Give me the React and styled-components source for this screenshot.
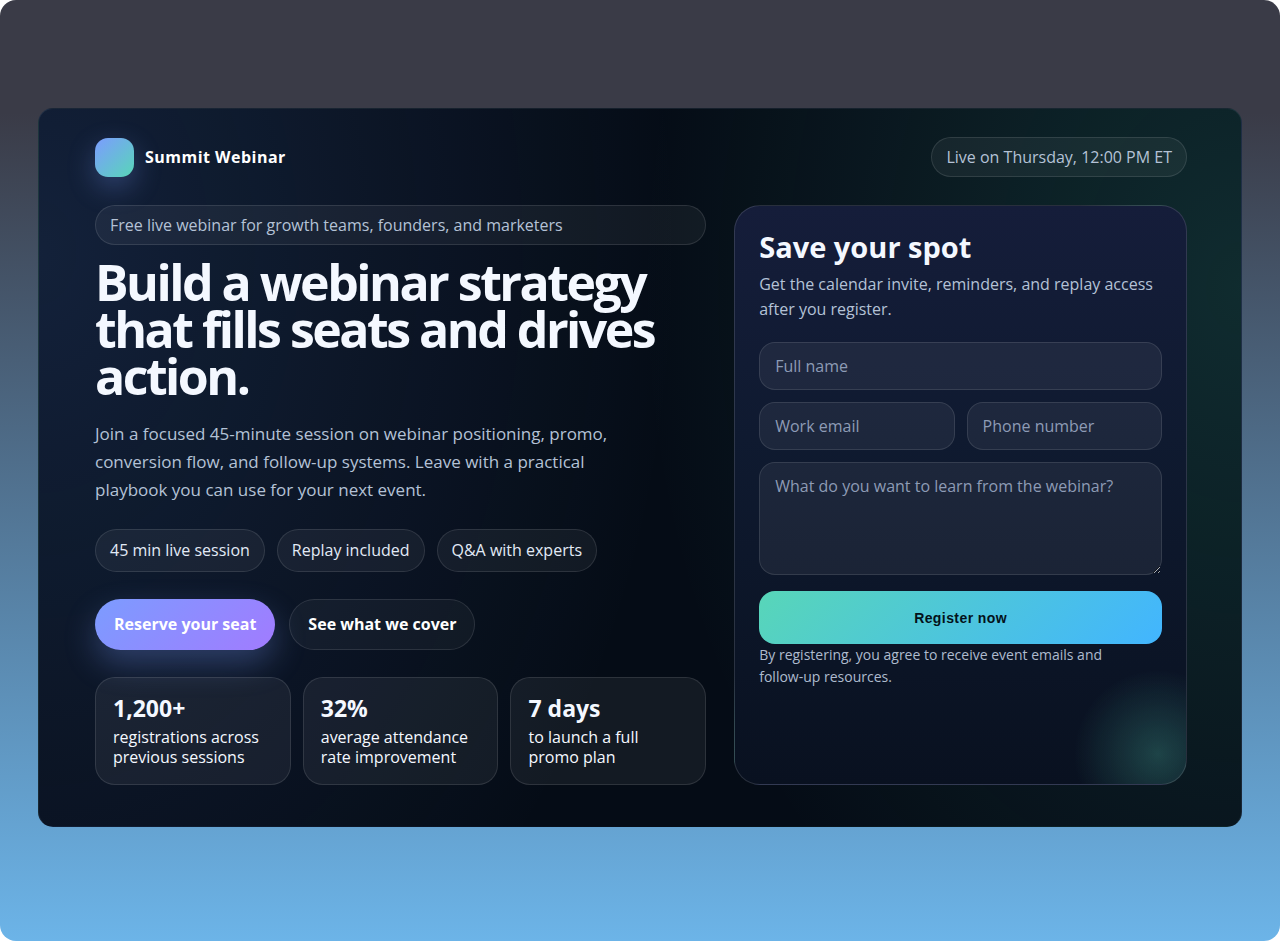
import React from 'react'
import styled, { createGlobalStyle } from 'styled-components'

const stats = [
    { value: '1,200+', label: 'registrations across previous sessions' },
    { value: '32%', label: 'average attendance rate improvement' },
    { value: '7 days', label: 'to launch a full promo plan' },
]

const chips = ['45 min live session', 'Replay included', 'Q&A with experts']

function RegisterForm() {
    return (
        <Card id="register">
            <CardTitle>Save your spot</CardTitle>
            <CardText>Get the calendar invite, reminders, and replay access after you register.</CardText>
            <Form onSubmit={(e) => e.preventDefault()}>
                <Input type="text" aria-label="Full name" placeholder="Full name" />
                <FieldRow>
                    <Input type="email" aria-label="Work email" placeholder="Work email" />
                    <Input type="tel" aria-label="Phone number" placeholder="Phone number" />
                </FieldRow>
                <TextArea
                    aria-label="What do you want to learn from the webinar?"
                    placeholder="What do you want to learn from the webinar?"
                />
                <Submit type="submit">Register now</Submit>
            </Form>
            <Note>By registering, you agree to receive event emails and follow-up resources.</Note>
        </Card>
    )
}

export default function App() {
    return (
        <Page>
            <GlobalStyle />
            <Panel>
                <TopBar>
                    <Brand>
                        <BrandMark />
                        Summit Webinar
                    </Brand>
                    <Pill>Live on Thursday, 12:00 PM ET</Pill>
                </TopBar>
                <Hero>
                    <Intro>
                        <Pill>Free live webinar for growth teams, founders, and marketers</Pill>
                        <Title>Build a webinar strategy that fills seats and drives action.</Title>
                        <Lead>
                            Join a focused 45-minute session on webinar positioning, promo, conversion
                            flow, and follow-up systems. Leave with a practical playbook you can use for
                            your next event.
                        </Lead>
                        <Chips>
                            {chips.map((chip) => (
                                <Chip key={chip}>{chip}</Chip>
                            ))}
                        </Chips>
                        <Actions>
                            <ActionLink href="#register" $primary>Reserve your seat</ActionLink>
                            <ActionLink href="#agenda">See what we cover</ActionLink>
                        </Actions>
                        <Stats>
                            {stats.map((stat) => (
                                <Stat key={stat.value}>
                                    <StatValue>{stat.value}</StatValue>
                                    <StatLabel>{stat.label}</StatLabel>
                                </Stat>
                            ))}
                        </Stats>
                    </Intro>
                    <RegisterForm />
                </Hero>
            </Panel>
        </Page>
    )
}

const GlobalStyle = createGlobalStyle`
    *, *::before, *::after {
        box-sizing: border-box;
    }
    body {
        margin: 0;
        background: #fff;
        color: #f4f8ff;
        font-family: 'Open Sans', 'Noto Sans', sans-serif;
        font-size: 16px;
    }
    h1, h2, p, ul {
        margin: 0;
        padding: 0;
    }
`
const Page = styled.div`
    min-height: 100vh;
    padding: 108px 38px 114px;
    border-radius: 16px;
    background: linear-gradient(180deg, #3a3b47 0%, #3a3b47 12%, #6cb4e8 100%);
`
const Panel = styled.main`
    padding: 28px 54px 41px 56px;
    border: 1px solid rgba(120, 150, 170, 0.14);
    border-bottom-color: transparent;
    border-radius: 15px;
    background:
        radial-gradient(640px 900px at 0% 20%, rgba(90, 138, 235, 0.17), transparent),
        radial-gradient(600px 800px at 100% 25%, rgba(70, 200, 170, 0.17), transparent),
        #050c16;
`
const TopBar = styled.header`
    display: flex;
    align-items: center;
    justify-content: space-between;
    margin-bottom: 28px;
`
const Brand = styled.div`
    display: flex;
    align-items: center;
    gap: 11px;
    color: #fff;
    font-weight: 700;
    letter-spacing: 0.03em;
`
const BrandMark = styled.span`
    width: 39px;
    height: 39px;
    border-radius: 13px;
    background: linear-gradient(135deg, #7c9cff, #58d6b8);
    box-shadow: 0 10px 28px rgba(124, 156, 255, 0.3);
`
const Pill = styled.div`
    padding: 8px 14px;
    border: 1px solid rgba(255, 255, 255, 0.11);
    border-radius: 24px;
    background: rgba(255, 255, 255, 0.05);
    color: #b4c2d6;
    line-height: 22px;
`
const Hero = styled.div`
    display: grid;
    grid-template-columns: 1.35fr 1fr;
    gap: 28px;
`
const Intro = styled.section`
    min-width: 0;
`
const Title = styled.h1`
    margin-top: 14px;
    font-size: 50px;
    line-height: 47px;
    letter-spacing: -0.05em;
`
const Lead = styled.p`
    max-width: 560px;
    margin-top: 20px;
    color: #b4c2d6;
    font-size: 17px;
    line-height: 28px;
`
const Chips = styled.ul`
    display: flex;
    flex-wrap: wrap;
    gap: 12px;
    margin-top: 25px;
    list-style: none;
`
const Chip = styled.li`
    padding: 9px 14px;
    border: 1px solid rgba(255, 255, 255, 0.11);
    border-radius: 22px;
    background: rgba(255, 255, 255, 0.05);
    color: #e2eaf6;
    line-height: 23px;
`
const Actions = styled.div`
    display: flex;
    gap: 14px;
    margin-top: 27px;
`
const ActionLink = styled.a`
    padding: 13px 18px;
    border: 1px solid ${(props) => (props.$primary ? 'transparent' : 'rgba(255, 255, 255, 0.11)')};
    border-radius: 26px;
    background: ${(props) =>
        props.$primary
            ? 'linear-gradient(135deg, #7c9cff, #a17bff) border-box'
            : 'rgba(255, 255, 255, 0.04)'};
    box-shadow: ${(props) => (props.$primary ? '0 14px 32px rgba(124, 156, 255, 0.3)' : 'none')};
    color: #fff;
    font-weight: 700;
    line-height: 23px;
    text-decoration: none;
`
const Stats = styled.div`
    display: grid;
    grid-template-columns: repeat(3, 1fr);
    gap: 12px;
    margin-top: 27px;
`
const Stat = styled.div`
    padding: 15px 17px 17px;
    border: 1px solid rgba(255, 255, 255, 0.11);
    border-radius: 20px;
    background: rgba(255, 255, 255, 0.06);
`
const StatValue = styled.div`
    margin-bottom: 4px;
    font-size: 23px;
    font-weight: 700;
    line-height: 30px;
`
const StatLabel = styled.div`
    line-height: 20px;
`
const Card = styled.section`
    padding: 23px 24px;
    border: 1px solid rgba(255, 255, 255, 0.13);
    border-radius: 26px;
    background:
        radial-gradient(circle at calc(100% - 28px) calc(100% - 30px), rgba(88, 214, 184, 0.25), transparent 84px),
        linear-gradient(180deg, #151d3a, #0f1a30 40%, #091120);
`
const CardTitle = styled.h2`
    font-size: 29px;
    line-height: 36px;
`
const CardText = styled.p`
    margin-top: 7px;
    color: #b4c2d6;
    line-height: 25px;
`
const Form = styled.form`
    display: grid;
    gap: 12px;
    margin-top: 20px;
`
const FieldRow = styled.div`
    display: grid;
    grid-template-columns: 1fr 1fr;
    gap: 12px;
`
const Input = styled.input`
    width: 100%;
    min-width: 0;
    padding: 12px 15px;
    border: 1px solid rgba(255, 255, 255, 0.11);
    border-radius: 16px;
    background: rgba(255, 255, 255, 0.06);
    color: #f4f8ff;
    font: inherit;
    line-height: 22px;
    outline: none;
    &::placeholder {
        color: #8d9bb5;
    }
`
const TextArea = styled(Input).attrs({ as: 'textarea' })`
    display: block;
    height: 113px;
    resize: vertical;
`
const Submit = styled.button`
    height: 53px;
    margin-top: 4px;
    border: 0;
    border-radius: 16px;
    background: linear-gradient(135deg, #58d6b8, #42b5ff);
    color: #04121a;
    font-family: 'Liberation Sans', Arial, sans-serif;
    font-size: 14px;
    font-weight: 800;
    letter-spacing: 0.03em;
`
const Note = styled.p`
    max-width: 376px;
    color: #aebbce;
    font-size: 14px;
    line-height: 22px;
`
